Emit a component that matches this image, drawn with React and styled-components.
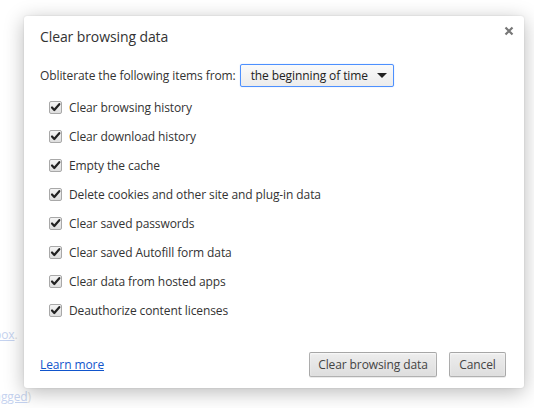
import styled, { createGlobalStyle } from "styled-components";

const GlobalStyle = createGlobalStyle`
    html, body {
        margin: 0;
        padding: 0;
        background: #ffffff;
    }
    body {
        font-family: "Open Sans", "Noto Sans", sans-serif;
        color: #333;
        letter-spacing: -0.1px;
    }
`

const Page = styled.div`
    position: relative;
    width: 534px;
    height: 408px;
    overflow: hidden;
    background: #ffffff;
`

const Behind = styled.div`
    display: flex;
    flex-direction: column;
    align-items: flex-start;
    padding-top: 326px;
    gap: 45px;
    font-size: 12px;
`

const BehindLine = styled.span`
    margin-left: ${p => p.$shift}px;
`

const FadedLink = styled.span`
    color: #9fb6e6;
    text-decoration: underline;
`

const FadedText = styled.span`
    color: #c8c8c8;
`

const Overlay = styled.div`
    position: absolute;
    inset: 0;
    background: rgba(255, 255, 255, 0.4);
`

const Dialog = styled.div`
    position: absolute;
    left: 24px;
    top: 16px;
    width: 500px;
    height: 372px;
    box-sizing: border-box;
    background: #ffffff;
    border-radius: 3px;
    box-shadow: 0 4px 20px rgba(0, 0, 0, 0.28), 0 0 2px rgba(0, 0, 0, 0.12);
    padding: 11px 16px 0 16px;
    display: flex;
    flex-direction: column;
`

const Title = styled.h1`
    margin: 0;
    font-size: 14px;
    font-weight: 400;
    color: #333;
    line-height: 20px;
`

const Close = styled.button`
    position: absolute;
    top: 8px;
    right: 8px;
    width: 14px;
    height: 14px;
    padding: 0;
    border: none;
    background: none;
    display: flex;
    align-items: center;
    justify-content: center;
`

const Content = styled.div`
    display: flex;
    flex-direction: column;
    margin-top: 17px;
    font-size: 12px;
`

const PeriodRow = styled.div`
    display: flex;
    align-items: center;
    gap: 4px;
`

const Select = styled.div`
    display: flex;
    align-items: center;
    justify-content: space-between;
    box-sizing: border-box;
    width: 154px;
    height: 23px;
    padding: 0 6px 0 10px;
    border: 1px solid #4d90fe;
    border-radius: 2px;
    background: linear-gradient(#fafafa, #ececec);
    box-shadow: 0 0 1px rgba(77, 144, 254, 0.6);
    color: #222;
`

const Arrow = styled.span`
    width: 0;
    height: 0;
    border-left: 5px solid transparent;
    border-right: 5px solid transparent;
    border-top: 5px solid #222;
`

const Options = styled.div`
    display: flex;
    flex-direction: column;
    margin-top: 6px;
    padding-left: 9px;
`

const Option = styled.label`
    display: flex;
    align-items: center;
    gap: 7px;
    height: 29px;
    color: #333;
`

const Box = styled.span`
    display: flex;
    align-items: center;
    justify-content: center;
    box-sizing: border-box;
    width: 13px;
    height: 13px;
    border: 1px solid #a8a8a8;
    border-radius: 2px;
    background: linear-gradient(#f4f4f4, #dedede);
`

const Footer = styled.div`
    display: flex;
    align-items: center;
    justify-content: space-between;
    margin-top: auto;
    height: 26px;
    padding: 0 2px 11px 0;
`

const Link = styled.a`
    color: #1155cc;
    font-size: 12px;
    text-decoration: underline;
`

const Buttons = styled.div`
    display: flex;
    gap: 12px;
`

const Button = styled.button`
    box-sizing: border-box;
    height: 25px;
    min-width: ${p => p.$wide ? "128px" : "57px"};
    padding: 0 8px;
    font-family: inherit;
    font-size: 12px;
    letter-spacing: -0.1px;
    color: #444;
    border: 1px solid rgba(0, 0, 0, 0.25);
    border-radius: 2px;
    background: linear-gradient(#ededed, #dedede);
    box-shadow: 0 1px 0 rgba(0, 0, 0, 0.08), inset 0 1px 2px rgba(255, 255, 255, 0.75);
`

const items = [
    "Clear browsing history",
    "Clear download history",
    "Empty the cache",
    "Delete cookies and other site and plug-in data",
    "Clear saved passwords",
    "Clear saved Autofill form data",
    "Clear data from hosted apps",
    "Deauthorize content licenses",
]

const Check = () => (
    <svg width="11" height="11" viewBox="0 0 11 11">
        <path d="M2 5.5 L4.3 8 L9.3 2.2" fill="none" stroke="#222" strokeWidth="2.2" strokeLinecap="round" strokeLinejoin="round" />
    </svg>
)

const App = () => {
    return (
        <>
            <GlobalStyle />
            <Page>
                <Behind>
                    <BehindLine $shift={-6}><FadedLink>box</FadedLink><FadedText>.</FadedText></BehindLine>
                    <BehindLine $shift={-16}><FadedText>(</FadedText><FadedLink>flagged</FadedLink><FadedText>)</FadedText></BehindLine>
                </Behind>
                <Overlay />
                <Dialog>
                    <Title>Clear browsing data</Title>
                    <Close aria-label="Close">
                        <svg width="10" height="10" viewBox="0 0 10 10">
                            <path d="M1.5 1.5 L8.5 8.5 M8.5 1.5 L1.5 8.5" stroke="#777" strokeWidth="2.2" />
                        </svg>
                    </Close>
                    <Content>
                        <PeriodRow>
                            <span>Obliterate the following items from:</span>
                            <Select>
                                <span>the beginning of time</span>
                                <Arrow />
                            </Select>
                        </PeriodRow>
                        <Options>
                            {items.map(item => (
                                <Option key={item}>
                                    <Box><Check /></Box>
                                    <span>{item}</span>
                                </Option>
                            ))}
                        </Options>
                    </Content>
                    <Footer>
                        <Link href="#">Learn more</Link>
                        <Buttons>
                            <Button $wide>Clear browsing data</Button>
                            <Button>Cancel</Button>
                        </Buttons>
                    </Footer>
                </Dialog>
            </Page>
        </>
    )
}

export default App
